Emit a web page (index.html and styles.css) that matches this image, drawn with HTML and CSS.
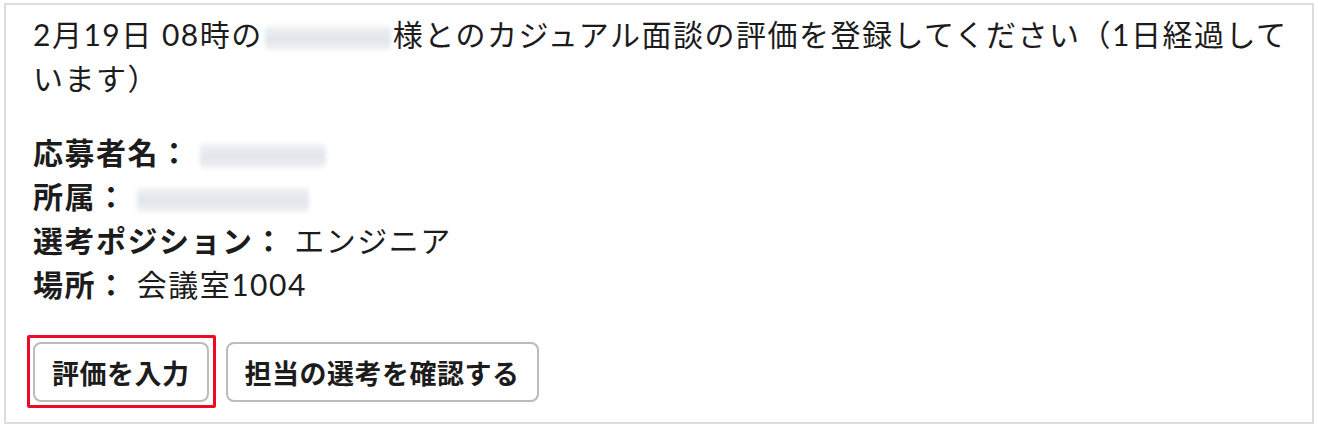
FILE: index.html
```html
<!DOCTYPE html>
<html lang="ja">
<head>
<meta charset="utf-8">
<link rel="stylesheet" href="styles.css">
</head>
<body>
<div class="card">
  <p class="message">2月19日 08時の<span class="blur blur-name"></span>様とのカジュアル面談の評価を登録してください（1日経過しています）</p>
  <div class="fields">
    <div class="field"><span class="label">応募者名：</span> <span class="blur blur-f1"></span></div>
    <div class="field"><span class="label">所属：</span> <span class="blur blur-f2"></span></div>
    <div class="field"><span class="label">選考ポジション：</span> エンジニア</div>
    <div class="field"><span class="label">場所：</span> 会議室1004</div>
  </div>
  <div class="actions">
    <button class="btn btn-highlight">評価を入力</button>
    <button class="btn">担当の選考を確認する</button>
  </div>
</div>
</body>
</html>
```

FILE: styles.css
```css
html, body {
  margin: 0;
  padding: 0;
  background: #ffffff;
}
body {
  padding: 3px 0 0 4px;
  font-family: Lato, "Noto Sans CJK JP", sans-serif;
  color: #1d1c1d;
}
.card {
  box-sizing: border-box;
  width: 1310px;
  height: 421px;
  border: 2px solid #dddddd;
  background: #ffffff;
  padding: 7px 24px 0 27px;
}
.message {
  margin: 0;
  font-size: 30px;
  line-height: 44px;
  letter-spacing: 1.5px;
}
.fields {
  margin-top: 30px;
}
.field {
  font-size: 30px;
  line-height: 44px;
  letter-spacing: 1.5px;
}
.label {
  font-weight: 700;
}
.blur {
  display: inline-block;
  vertical-align: middle;
  height: 24px;
  background: linear-gradient(180deg, #f0f2f4 0%, #e1e5ea 55%, #f0f2f4 100%);
  filter: blur(2px);
  border-radius: 3px;
}
.blur-name {
  width: 126px;
  margin: 0 2px 0 2px;
}
.blur-f1 {
  width: 126px;
}
.blur-f2 {
  width: 172px;
}
.actions {
  display: flex;
  gap: 17px;
  margin-top: 36px;
}
.btn {
  position: relative;
  font-family: Lato, "Noto Sans CJK JP", sans-serif;
  font-size: 27px;
  letter-spacing: 0.5px;
  font-weight: 700;
  color: #1d1c1d;
  height: 60px;
  padding: 0 17px;
  background: #ffffff;
  border: 2px solid #bbbbbb;
  border-radius: 8px;
}
.btn-highlight::after {
  content: "";
  position: absolute;
  left: -8px;
  top: -9px;
  right: -9px;
  bottom: -8px;
  border: 3px solid #ee0a24;
  border-radius: 2px;
  pointer-events: none;
}
```
